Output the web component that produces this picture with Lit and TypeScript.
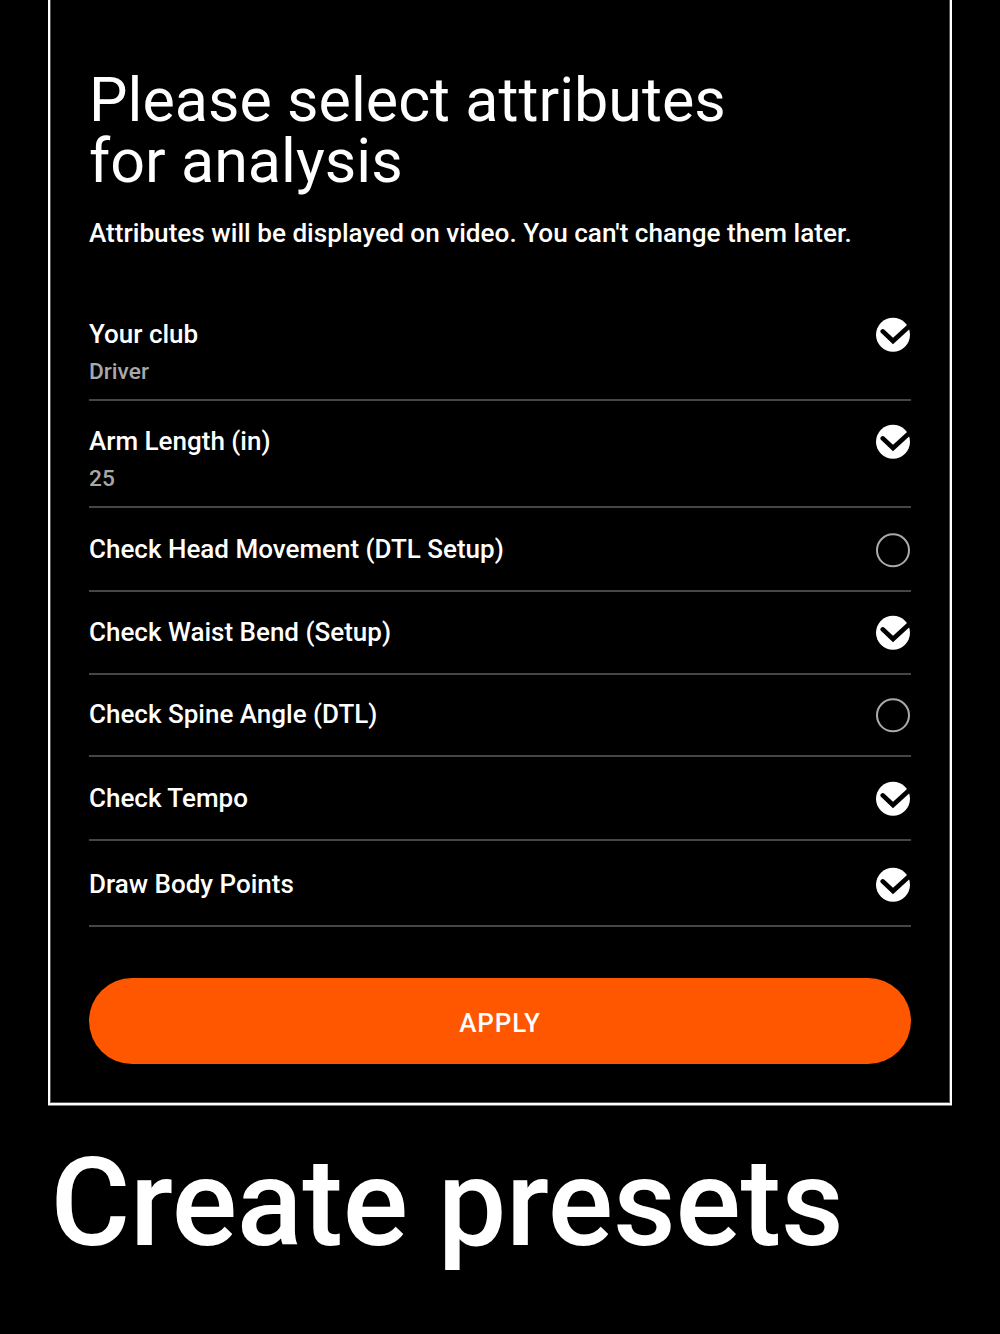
import { LitElement, html, css, svg } from "lit";
import { customElement, state } from "lit/decorators.js";

interface Attribute {
  label: string;
  value?: string;
  checked: boolean;
  size: string;
}

@customElement("app-root")
export class AppRoot extends LitElement {
  static styles = css`
    :host {
      display: flow-root;
      height: 1334px;
      overflow: hidden;
      background: #000;
      color: #fff;
      font-family: Roboto, "Liberation Sans", sans-serif;
    }
    * { box-sizing: border-box; }
    .frame {
      margin: -4px 48px 0;
      height: 1109px;
      border: 2px solid #fff;
      box-shadow: 0 1px 0 #777, inset 0 0 0 1px #555;
      padding: 72px 39px 0;
    }
    h1 {
      margin: 0;
      font-size: 61px;
      line-height: 61px;
      font-weight: 400;
      letter-spacing: 0.03px;
      white-space: nowrap;
    }
    .note {
      margin: 26px 0 0;
      font-size: 26.15px;
      line-height: 30px;
      font-weight: 500;
      white-space: nowrap;
    }
    .list { margin-top: 46px; }
    .row {
      display: flex;
      justify-content: space-between;
      align-items: flex-start;
      border-bottom: 2px solid #464646;
      font-size: 26px;
      line-height: 30px;
      font-weight: 500;
      cursor: pointer;
    }
    .first { height: 107px; padding-top: 25px; }
    .tall { height: 107px; padding-top: 25px; }
    .head { height: 84px; padding-top: 26px; }
    .waist { height: 83px; padding-top: 25px; }
    .spine { height: 82px; padding-top: 24px; }
    .tempo { height: 84px; padding-top: 26px; }
    .body { height: 86px; padding-top: 28px; }
    .value {
      margin-top: 8px;
      font-size: 22.7px;
      color: #a8a8a8;
    }
    .mark { width: 36px; height: 36px; flex: none; margin-top: -2px; display: block; }
    .apply {
      display: block;
      width: 100%;
      height: 86px;
      margin-top: 51px;
      padding: 3px 0 0;
      border: 0;
      border-radius: 43px;
      background: #ff5600;
      color: #fff;
      font: 500 26px/30px Roboto, "Liberation Sans", sans-serif;
      letter-spacing: 0.9px;
    }
    h2 {
      margin: 27px 0 0 50.5px;
      font-size: 122px;
      line-height: 143px;
      font-weight: 500;
      letter-spacing: -0.25px;
      white-space: nowrap;
    }
  `;

  @state() private items: Attribute[] = [
    { label: "Your club", value: "Driver", checked: true, size: "first" },
    { label: "Arm Length (in)", value: "25", checked: true, size: "tall" },
    { label: "Check Head Movement (DTL Setup)", checked: false, size: "head" },
    { label: "Check Waist Bend (Setup)", checked: true, size: "waist" },
    { label: "Check Spine Angle (DTL)", checked: false, size: "spine" },
    { label: "Check Tempo", checked: true, size: "tempo" },
    { label: "Draw Body Points", checked: true, size: "body" },
  ];

  private toggle(i: number) {
    this.items = this.items.map((it, n) => (n === i ? { ...it, checked: !it.checked } : it));
  }

  private mark(checked: boolean) {
    return html`<svg class="mark" viewBox="0 0 36 36">
      ${checked
        ? svg`<circle cx="18" cy="17.8" r="17" fill="#fff"/><path d="M7.8 14.4 18 24 35 8.6" fill="none" stroke="#000" stroke-width="4.7" stroke-linecap="round"/>`
        : svg`<circle cx="18" cy="18.3" r="16" fill="none" stroke="#aaa" stroke-width="2"/>`}
    </svg>`;
  }

  render() {
    return html`
      <section class="frame">
        <h1>Please select attributes<br />for analysis</h1>
        <p class="note">Attributes will be displayed on video. You can't change them later.</p>
        <div class="list">
          ${this.items.map(
            (it, i) => html`<div class="row ${it.size}" @click=${() => this.toggle(i)}>
              <div>
                <div>${it.label}</div>
                ${it.value ? html`<div class="value">${it.value}</div>` : null}
              </div>
              ${this.mark(it.checked)}
            </div>`
          )}
        </div>
        <button class="apply">APPLY</button>
      </section>
      <h2>Create presets</h2>
    `;
  }
}
